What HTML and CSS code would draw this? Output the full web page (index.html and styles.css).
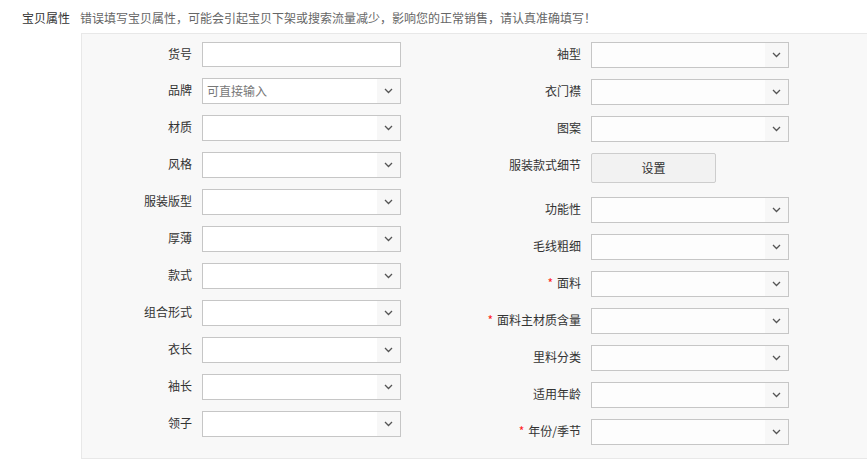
FILE: index.html
```html
<!DOCTYPE html>
<html lang="zh-CN">
<head>
<meta charset="utf-8">
<title>宝贝属性</title>
<link rel="stylesheet" href="styles.css">
</head>
<body>
<div class="section">
  <div class="title">宝贝属性</div>
  <div class="content">
    <div class="tip">错误填写宝贝属性，可能会引起宝贝下架或搜索流量减少，影响您的正常销售，请认真准确填写！</div>
    <div class="panel">
      <div class="col col-left">
        <div class="row first"><label class="lbl">货号</label><div class="ctl input"></div></div>
        <div class="row"><label class="lbl">品牌</label><div class="ctl select"><span class="ph">可直接输入</span><span class="arrow"><svg width="9" height="6" viewBox="0 0 9 6"><polyline points="1,1 4.5,4.5 8,1" fill="none" stroke="#555" stroke-width="1.3"/></svg></span></div></div>
        <div class="row"><label class="lbl">材质</label><div class="ctl select"><span class="ph"></span><span class="arrow"><svg width="9" height="6" viewBox="0 0 9 6"><polyline points="1,1 4.5,4.5 8,1" fill="none" stroke="#555" stroke-width="1.3"/></svg></span></div></div>
        <div class="row"><label class="lbl">风格</label><div class="ctl select"><span class="ph"></span><span class="arrow"><svg width="9" height="6" viewBox="0 0 9 6"><polyline points="1,1 4.5,4.5 8,1" fill="none" stroke="#555" stroke-width="1.3"/></svg></span></div></div>
        <div class="row"><label class="lbl">服装版型</label><div class="ctl select"><span class="ph"></span><span class="arrow"><svg width="9" height="6" viewBox="0 0 9 6"><polyline points="1,1 4.5,4.5 8,1" fill="none" stroke="#555" stroke-width="1.3"/></svg></span></div></div>
        <div class="row"><label class="lbl">厚薄</label><div class="ctl select"><span class="ph"></span><span class="arrow"><svg width="9" height="6" viewBox="0 0 9 6"><polyline points="1,1 4.5,4.5 8,1" fill="none" stroke="#555" stroke-width="1.3"/></svg></span></div></div>
        <div class="row"><label class="lbl">款式</label><div class="ctl select"><span class="ph"></span><span class="arrow"><svg width="9" height="6" viewBox="0 0 9 6"><polyline points="1,1 4.5,4.5 8,1" fill="none" stroke="#555" stroke-width="1.3"/></svg></span></div></div>
        <div class="row"><label class="lbl">组合形式</label><div class="ctl select"><span class="ph"></span><span class="arrow"><svg width="9" height="6" viewBox="0 0 9 6"><polyline points="1,1 4.5,4.5 8,1" fill="none" stroke="#555" stroke-width="1.3"/></svg></span></div></div>
        <div class="row"><label class="lbl">衣长</label><div class="ctl select"><span class="ph"></span><span class="arrow"><svg width="9" height="6" viewBox="0 0 9 6"><polyline points="1,1 4.5,4.5 8,1" fill="none" stroke="#555" stroke-width="1.3"/></svg></span></div></div>
        <div class="row"><label class="lbl">袖长</label><div class="ctl select"><span class="ph"></span><span class="arrow"><svg width="9" height="6" viewBox="0 0 9 6"><polyline points="1,1 4.5,4.5 8,1" fill="none" stroke="#555" stroke-width="1.3"/></svg></span></div></div>
        <div class="row"><label class="lbl">领子</label><div class="ctl select"><span class="ph"></span><span class="arrow"><svg width="9" height="6" viewBox="0 0 9 6"><polyline points="1,1 4.5,4.5 8,1" fill="none" stroke="#555" stroke-width="1.3"/></svg></span></div></div>
      </div>
      <div class="col col-right">
        <div class="row"><label class="lbl">袖型</label><div class="ctl select"><span class="ph"></span><span class="arrow"><svg width="9" height="6" viewBox="0 0 9 6"><polyline points="1,1 4.5,4.5 8,1" fill="none" stroke="#555" stroke-width="1.3"/></svg></span></div></div>
        <div class="row"><label class="lbl">衣门襟</label><div class="ctl select"><span class="ph"></span><span class="arrow"><svg width="9" height="6" viewBox="0 0 9 6"><polyline points="1,1 4.5,4.5 8,1" fill="none" stroke="#555" stroke-width="1.3"/></svg></span></div></div>
        <div class="row"><label class="lbl">图案</label><div class="ctl select"><span class="ph"></span><span class="arrow"><svg width="9" height="6" viewBox="0 0 9 6"><polyline points="1,1 4.5,4.5 8,1" fill="none" stroke="#555" stroke-width="1.3"/></svg></span></div></div>
        <div class="row row-btn"><label class="lbl">服装款式细节</label><div class="btn">设置</div></div>
        <div class="row"><label class="lbl">功能性</label><div class="ctl select"><span class="ph"></span><span class="arrow"><svg width="9" height="6" viewBox="0 0 9 6"><polyline points="1,1 4.5,4.5 8,1" fill="none" stroke="#555" stroke-width="1.3"/></svg></span></div></div>
        <div class="row"><label class="lbl">毛线粗细</label><div class="ctl select"><span class="ph"></span><span class="arrow"><svg width="9" height="6" viewBox="0 0 9 6"><polyline points="1,1 4.5,4.5 8,1" fill="none" stroke="#555" stroke-width="1.3"/></svg></span></div></div>
        <div class="row"><label class="lbl"><span class="req">*</span>面料</label><div class="ctl select"><span class="ph"></span><span class="arrow"><svg width="9" height="6" viewBox="0 0 9 6"><polyline points="1,1 4.5,4.5 8,1" fill="none" stroke="#555" stroke-width="1.3"/></svg></span></div></div>
        <div class="row"><label class="lbl"><span class="req">*</span>面料主材质含量</label><div class="ctl select"><span class="ph"></span><span class="arrow"><svg width="9" height="6" viewBox="0 0 9 6"><polyline points="1,1 4.5,4.5 8,1" fill="none" stroke="#555" stroke-width="1.3"/></svg></span></div></div>
        <div class="row"><label class="lbl">里料分类</label><div class="ctl select"><span class="ph"></span><span class="arrow"><svg width="9" height="6" viewBox="0 0 9 6"><polyline points="1,1 4.5,4.5 8,1" fill="none" stroke="#555" stroke-width="1.3"/></svg></span></div></div>
        <div class="row"><label class="lbl">适用年龄</label><div class="ctl select"><span class="ph"></span><span class="arrow"><svg width="9" height="6" viewBox="0 0 9 6"><polyline points="1,1 4.5,4.5 8,1" fill="none" stroke="#555" stroke-width="1.3"/></svg></span></div></div>
        <div class="row"><label class="lbl"><span class="req">*</span>年份/季节</label><div class="ctl select"><span class="ph"></span><span class="arrow"><svg width="9" height="6" viewBox="0 0 9 6"><polyline points="1,1 4.5,4.5 8,1" fill="none" stroke="#555" stroke-width="1.3"/></svg></span></div></div>
      </div>
    </div>
  </div>
</div>
</body>
</html>
```
FILE: styles.css
```css
html, body {
  margin: 0;
  padding: 0;
  background: #fff;
  overflow: hidden;
}
body {
  font-family: "Noto Sans CJK SC", "Liberation Sans", sans-serif;
  font-size: 12px;
  color: #333;
  width: 867px;
  height: 468px;
}
.section {
  display: flex;
  padding-top: 10px;
}
.title {
  width: 58px;
  padding-left: 22px;
  line-height: 16px;
  color: #333;
  flex: none;
}
.content {
  flex: none;
  width: 820px;
}
.tip {
  line-height: 16px;
  color: #666;
  white-space: nowrap;
}
.panel {
  margin-top: 7px;
  margin-left: 1px;
  border: 1px solid #e8e8e8;
  background: #f8f8f8;
  padding: 8px 0 2px 0;
  display: flex;
  box-sizing: border-box;
  width: 820px;
}
.col {
  display: flex;
  flex-direction: column;
}
.row {
  display: flex;
  align-items: flex-start;
  margin-bottom: 11px;
}
.lbl {
  box-sizing: border-box;
  padding-right: 10px;
  padding-top: 4px;
  line-height: 16px;
  text-align: right;
  color: #333;
  white-space: nowrap;
}
.col-left .lbl { width: 120px; }
.col-right .lbl { width: 190px; }
.col-left .ctl { width: 199px; }
.col-right .ctl { width: 198px; }
.ctl {
  box-sizing: border-box;
  height: 26px;
  border: 1px solid #c6c6c6;
  background: #fff;
}
.input { height: 25px; }
.select {
  display: flex;
  align-items: stretch;
}
.ph {
  flex: 1;
  padding-left: 4px;
  line-height: 24px;
  color: #777;
}
.arrow {
  width: 23px;
  background: #f7f7f7;
  display: flex;
  align-items: center;
  justify-content: center;
}
.arrow svg { display: block; margin-left: 0; }
.col-right .select { background: #fdfdfd; }
.row-btn { margin-bottom: 14px; }
.btn {
  box-sizing: border-box;
  width: 125px;
  height: 30px;
  border: 1px solid #cdcdcd;
  border-radius: 2px;
  background: #f2f2f2;
  color: #333;
  text-align: center;
  line-height: 28px;
}
.req {
  color: #f22;
  margin-right: 4px;
}
```
